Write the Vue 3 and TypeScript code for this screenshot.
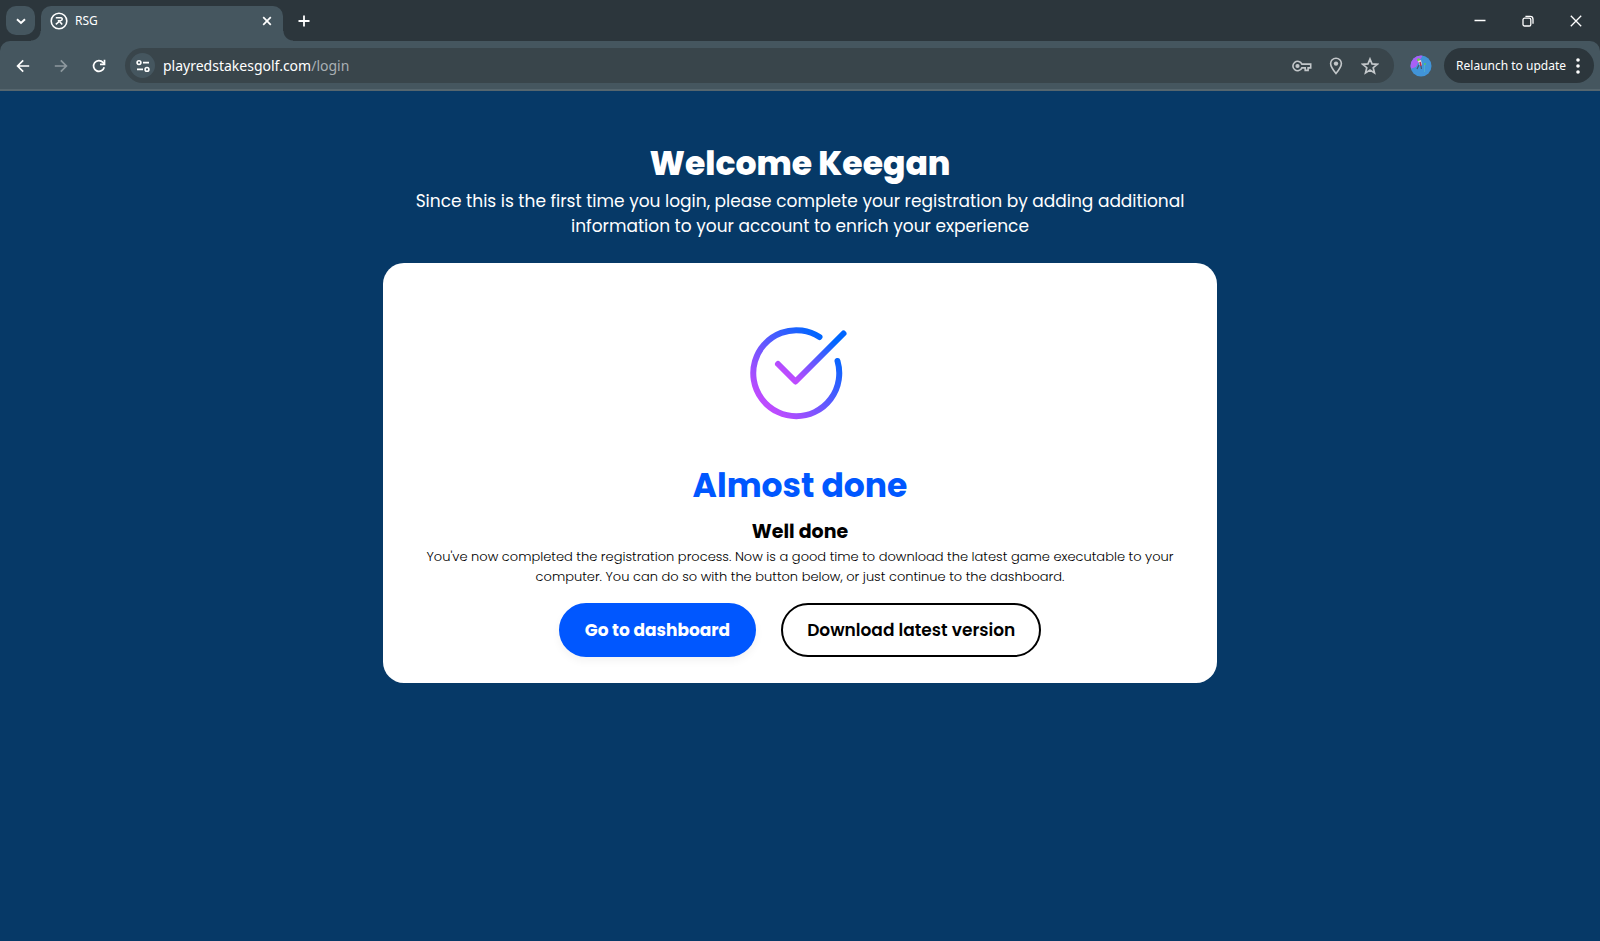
<script setup lang="ts">
import { ref } from 'vue'

const userName = ref('Keegan')
const address = { host: 'playredstakesgolf.com', path: '/login' }
</script>

<template>
  <div class="browser">
    <header class="chrome">
      <div class="tabstrip">
        <button class="tab-search" aria-label="Search tabs">
          <svg width="12" height="12" viewBox="0 0 12 12"><path d="M2 4.200 6 8l4-3.800" fill="none" stroke="#fff" stroke-width="1.900" /></svg>
        </button>
        <div class="tab">
          <svg class="favicon" width="18" height="18" viewBox="0 0 18 18" fill="none" stroke="#fff">
            <circle cx="9" cy="9" r="7.800" stroke-width="1.600" />
            <path d="M5.800 5.800H11c1.700 0 1.600 2.500 0 2.700L7.800 8.700M10.500 8.500 5.800 12.300M9.600 9.400l2.600 3.200" stroke-width="1.600" />
          </svg>
          <span class="tab-title">RSG</span>
          <button class="icon-button tab-close" aria-label="Close tab">
            <svg width="10" height="10" viewBox="0 0 10 10"><path d="m1.200 1.200 7.600 7.600m0-7.600L1.200 8.800" stroke="#fff" stroke-width="1.700" /></svg>
          </button>
        </div>
        <button class="icon-button new-tab" aria-label="New tab">
          <svg width="12" height="12" viewBox="0 0 12 12"><path d="M6 .5v11M.5 6h11" stroke="#fff" stroke-width="1.800" /></svg>
        </button>
        <div class="window-controls">
          <button class="icon-button" aria-label="Minimize">
            <svg width="12" height="12" viewBox="0 0 12 12"><path d="M.5 5.500h11" stroke="#fff" stroke-width="1.500" /></svg>
          </button>
          <button class="icon-button" aria-label="Restore">
            <svg width="12" height="12" viewBox="0 0 12 12" fill="none" stroke="#fff" stroke-width="1.300"><rect x="1" y="3.200" width="7.800" height="7.800" rx="1.600" /><path d="M3.400 1.400h4.800a2.800 2.800 0 0 1 2.800 2.800v4.600" /></svg>
          </button>
          <button class="icon-button" aria-label="Close window">
            <svg width="12" height="12" viewBox="0 0 12 12"><path d="m.8.8 10.400 10.400m0-10.400L.8 11.200" stroke="#fff" stroke-width="1.300" /></svg>
          </button>
        </div>
      </div>

      <div class="toolbar">
        <nav class="nav">
          <button class="icon-button" aria-label="Back">
            <svg width="14" height="14" viewBox="0 0 14 14" fill="none" stroke="#fff" stroke-width="1.700"><path d="M13.200 7H1.800M7.200 1.400 1.600 7l5.600 5.600" /></svg>
          </button>
          <button class="icon-button" aria-label="Forward">
            <svg width="14" height="14" viewBox="0 0 14 14" fill="none" stroke="#8d989e" stroke-width="1.700"><path d="M.8 7h11.400M6.800 1.400 12.400 7l-5.600 5.600" /></svg>
          </button>
          <button class="icon-button" aria-label="Reload">
            <svg width="14" height="14" viewBox="0 0 14 14" fill="none" stroke="#fff" stroke-width="1.700"><path d="M12.200 8.200A5.400 5.400 0 1 1 11 3.400l1.400 1.500" /><path d="M12.500.8v4.500H8" /></svg>
          </button>
        </nav>
        <div class="omnibox">
          <button class="site-info" aria-label="View site information">
            <svg width="14" height="14" viewBox="0 0 14 14" fill="none" stroke="#fff" stroke-width="1.600"><circle cx="3" cy="3.600" r="1.900" /><path d="M7 3.600h6M1 10.400h6" /><circle cx="11" cy="10.400" r="1.900" /></svg>
          </button>
          <div class="address"><span>{{ address.host }}</span><span class="path">{{ address.path }}</span></div>
          <button class="icon-button action" aria-label="Passwords">
            <svg width="20" height="12" viewBox="0 0 20 12" fill="none" stroke="#c3c7ca" stroke-width="1.600"><path d="M9.900 4.100A4.700 4.700 0 1 0 9.900 7.900h3.300v2.500h2.900V7.900h2.600V4.100z" /><circle cx="5.500" cy="6" r="1.300" fill="#c3c7ca" /></svg>
          </button>
          <button class="icon-button action" aria-label="Location">
            <svg width="14" height="18" viewBox="0 0 14 18" fill="none" stroke="#c3c7ca" stroke-width="1.600"><path d="M7 16.600C4.200 13.200 1.600 10 1.600 6.600a5.400 5.400 0 0 1 10.800 0c0 3.400-2.600 6.600-5.400 10z" /><circle cx="7" cy="6.600" r="2.200" fill="#c3c7ca" stroke="none" /></svg>
          </button>
          <button class="icon-button action" aria-label="Bookmark this tab">
            <svg width="18" height="18" viewBox="0 0 18 18" fill="none" stroke="#c3c7ca" stroke-width="1.700"><path d="m9 2 2 4.900 5.200.4-4 3.400 1.300 5.200L9 13.100l-4.500 2.800 1.300-5.200-4-3.400L7 6.900z" /></svg>
          </button>
        </div>
        <button class="icon-button profile" aria-label="Profile">
          <svg width="22" height="22" viewBox="0 0 22 22">
            <defs><clipPath id="avatar"><circle cx="11" cy="11" r="10.500" /></clipPath></defs>
            <g clip-path="url(#avatar)">
              <path fill="#4194d8" d="M0 0h22v22H0z" />
              <path fill="#a960f5" d="M0 0h13l-3 5-2 3-2 4-6 2z" />
              <circle cx="8.500" cy="4.800" r="1.500" fill="#67cf4b" />
              <path d="m8 6 3-1 1 5-2 1z" fill="#f2d8dd" />
              <path d="m10 7 1 4" stroke="#b42e4d" stroke-width="1.500" />
              <path d="M9 10 7 14m4-3 .5 3" stroke="#42566f" stroke-width="1.200" />
              <path d="M14.500 9v8" stroke="#4bacd0" />
              <circle cx="15" cy="9" r="1" fill="#4fc66c" />
            </g>
          </svg>
        </button>
        <button class="relaunch">
          <span>Relaunch to update</span>
          <svg width="4" height="16" viewBox="0 0 4 16" fill="#fff"><circle cx="2" cy="2" r="1.800" /><circle cx="2" cy="8" r="1.800" /><circle cx="2" cy="14" r="1.800" /></svg>
        </button>
      </div>
    </header>

    <main class="page">
      <section class="intro">
        <h1>Welcome {{ userName }}</h1>
        <p>Since this is the first time you login, please complete your registration by adding additional<br />information to your account to enrich your experience</p>
      </section>

      <section class="card">
        <svg class="check" width="104" height="94" viewBox="0 0 104 94" fill="none" stroke="url(#tick)" stroke-width="6" stroke-linecap="round" stroke-linejoin="round">
          <defs>
            <linearGradient id="tick" x1="0.150" y1="0.850" x2="0.850" y2="0.150">
              <stop offset="0" stop-color="#bd4bff" />
              <stop offset="1" stop-color="#0066ff" />
            </linearGradient>
          </defs>
          <path d="M71.500 11A43 43 0 1 0 89.500 35" />
          <path d="m30 38 17.500 17.500L95.500 7.500" />
        </svg>
        <h2>Almost done</h2>
        <h3>Well done</h3>
        <p>You've now completed the registration process. Now is a good time to download the latest game executable to your<br />computer. You can do so with the button below, or just continue to the dashboard.</p>
        <div class="buttons">
          <button class="pill primary">Go to dashboard</button>
          <button class="pill outline">Download latest version</button>
        </div>
      </section>
    </main>
  </div>
</template>

<style>
body {
  background: #063967;
}
</style>

<style scoped>
* {
  box-sizing: border-box;
}

.browser {
  min-height: 100vh;
  display: flex;
  flex-direction: column;
  font-family: "Poppins", "Inter", sans-serif;
}

button {
  font: inherit;
  border: 0;
  padding: 0;
  cursor: pointer;
}

svg {
  display: block;
  flex: none;
}

.chrome {
  background: #2c363c;
  color: #fff;
  font-family: "Segoe UI", "Noto Sans", sans-serif;
}

.icon-button {
  display: flex;
  align-items: center;
  justify-content: center;
  background: none;
}

.tabstrip {
  height: 41px;
  display: flex;
  align-items: center;
  padding-left: 6px;
}

.tab-search {
  width: 29px;
  height: 29px;
  border-radius: 10px;
  background: #45565f;
  display: flex;
  align-items: center;
  justify-content: center;
}

.tab {
  position: relative;
  align-self: flex-end;
  width: 242px;
  height: 35px;
  margin-left: 6px;
  padding: 0 9px 6px 9px;
  border-radius: 10px 10px 0 0;
  background: #45565f;
  display: flex;
  align-items: center;
  gap: 7px;
}

.tab::before,
.tab::after {
  content: "";
  position: absolute;
  bottom: 0;
  width: 10px;
  height: 10px;
}

.tab::before {
  right: 100%;
  background: radial-gradient(circle at 0 0, transparent 9px, #45565f 10px);
}

.tab::after {
  left: 100%;
  background: radial-gradient(circle at 100% 0, transparent 9px, #45565f 10px);
}

.tab-title {
  flex: 1;
  font-size: 12px;
}

.tab-close {
  width: 14px;
  height: 14px;
}

.new-tab {
  width: 28px;
  height: 28px;
  margin-left: 7px;
}

.window-controls {
  margin-left: auto;
  display: flex;
}

.window-controls .icon-button {
  width: 48px;
  height: 40px;
}

.toolbar {
  height: 50px;
  display: flex;
  align-items: center;
  padding: 1px 6px 0 16px;
  border-bottom: 2px solid #56666e;
  border-radius: 10px 10px 0 0;
  background: #45565f;
}

.nav {
  display: flex;
  gap: 24px;
}

.omnibox {
  flex: 1;
  height: 35px;
  margin-left: 19px;
  padding: 0 14px 0 5px;
  border-radius: 18px;
  background: #39454b;
  display: flex;
  align-items: center;
}

.site-info {
  width: 25px;
  height: 25px;
  border-radius: 50%;
  background: #45565f;
  display: flex;
  align-items: center;
  justify-content: center;
}

.address {
  flex: 1;
  margin-left: 8px;
  font-size: 14px;
}

.path {
  color: #a9b0b4;
}

.action {
  width: 20px;
  margin-left: 14px;
}

.profile {
  margin-left: 16px;
}

.relaunch {
  height: 35px;
  margin-left: 12px;
  padding: 0 14px 0 12px;
  border-radius: 18px;
  background: #2c363c;
  color: #fff;
  display: flex;
  align-items: center;
  gap: 10px;
  font-size: 12px;
}

.page {
  flex: 1;
  background: #063967;
  display: flex;
  flex-direction: column;
  align-items: center;
  padding: 49px 24px;
  text-align: center;
}

.intro {
  color: #fff;
}

h1,
h2,
h3,
p {
  margin: 0;
}

h1,
h2 {
  font-size: 33px;
  line-height: 48px;
  font-weight: 700;
}

h1 {
  margin-bottom: 1px;
  font-weight: 800;
}

.intro p {
  font-size: 17px;
  line-height: 25px;
}

.card {
  width: 100%;
  max-width: 834px;
  margin-top: 24px;
  padding: 63px 24px 26px;
  border-radius: 21px;
  background: #fff;
  color: #000;
  display: flex;
  flex-direction: column;
  align-items: center;
}

.check {
  margin-bottom: 42px;
}

h2 {
  color: #0057ff;
}

h3 {
  margin-top: 8px;
  font-size: 19px;
  line-height: 28px;
  font-weight: 700;
}

.card p {
  margin-top: 1px;
  font-size: 13px;
  line-height: 20px;
  font-weight: 300;
}

.buttons {
  display: flex;
  gap: 25px;
  margin-top: 16px;
}

.pill {
  height: 54px;
  padding: 0 24px;
  border: 2px solid #000;
  border-radius: 27px;
  font-size: 17px;
  font-weight: 700;
}

.primary {
  border-color: #0057ff;
  background: #0057ff;
  color: #fff;
  box-shadow: 0 4px 8px rgba(0, 0, 0, 0.05);
}

.outline {
  background: #fff;
  color: #000;
  font-weight: 600;
}
</style>
